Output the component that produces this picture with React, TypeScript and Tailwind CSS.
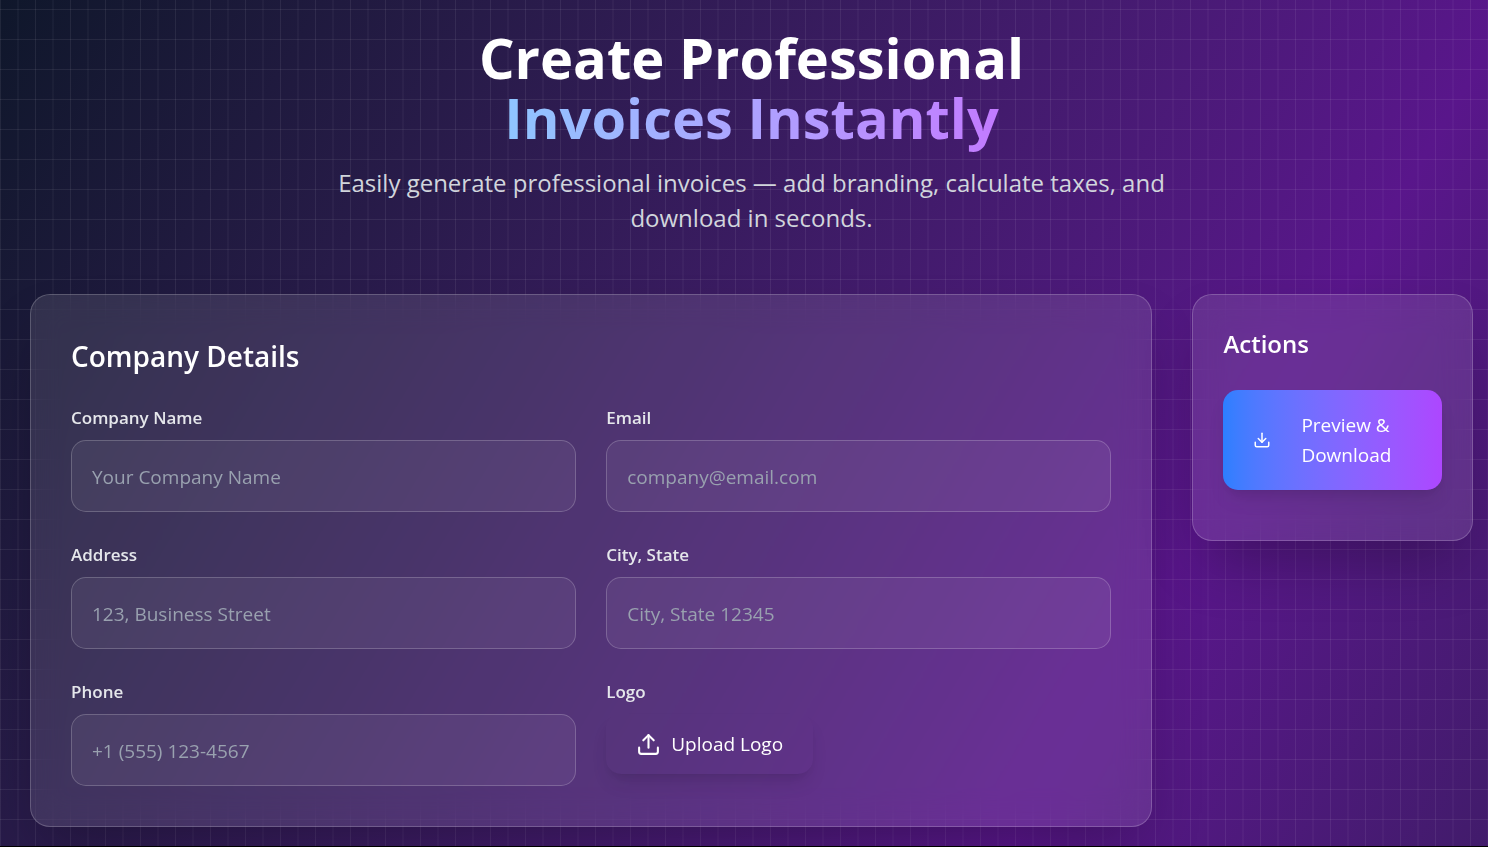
import React from "react";
import { Download, Upload } from "lucide-react";

type FieldProps = {
  id: string;
  label: string;
  placeholder: string;
  type?: string;
};

const labelClass =
  "mb-2 block text-[17px] leading-7 font-semibold text-gray-200";

const cardClass =
  "rounded-[20px] border border-white/20 bg-white/10 shadow-[0_31px_62px_-15px_rgba(0,0,0,0.28)] backdrop-blur-lg";

const buttonClass =
  "flex items-center rounded-[15px] px-[30px] text-[19px] leading-[30px] font-medium text-white shadow-[0_12px_19px_-4px_rgba(0,0,0,0.1),0_5px_8px_-5px_rgba(0,0,0,0.1)]";

function Field({ id, label, placeholder, type = "text" }: FieldProps) {
  return (
    <div>
      <label htmlFor={id} className={labelClass}>
        {label}
      </label>
      <input
        id={id}
        type={type}
        placeholder={placeholder}
        className="h-[72px] w-full rounded-[15px] border border-white/20 bg-white/[0.06] px-5 pt-0.5 text-[19px] text-white placeholder:text-[#99a1af] focus:outline-none focus:ring-2 focus:ring-blue-400"
      />
    </div>
  );
}

function CompanyDetails() {
  return (
    <section className={`${cardClass} p-10`}>
      <h2 className="mb-[27px] text-[28px] leading-[42px] font-semibold text-white">Company Details</h2>
      <div className="grid grid-cols-2 gap-x-[30px] gap-y-[29px]">
        <Field id="company-name" label="Company Name" placeholder="Your Company Name" />
        <Field id="email" label="Email" placeholder="company@email.com" type="email" />
        <Field id="address" label="Address" placeholder="123, Business Street" />
        <Field id="city" label="City, State" placeholder="City, State 12345" />
        <Field id="phone" label="Phone" placeholder="+1 (555) 123-4567" type="tel" />
        <div>
          <span id="logo-label" className={labelClass}>
            Logo
          </span>
          <button
            type="button"
            aria-describedby="logo-label"
            className={`${buttonClass} gap-[10px] py-[15px]`}
          >
            <Upload size={25} />
            Upload Logo
          </button>
        </div>
      </div>
    </section>
  );
}

function Actions() {
  return (
    <aside className={`${cardClass} px-[30px] pt-[30px] pb-[50px]`}>
      <h3 className="mb-7 text-2xl leading-[37px] font-semibold text-white">Actions</h3>
      <button
        type="button"
        className={`${buttonClass} w-full gap-[30px] bg-linear-to-r from-blue-500 to-purple-500 py-5 text-left`}
      >
        <Download size={18} className="shrink-0" />
        <span>Preview &amp; Download</span>
      </button>
    </aside>
  );
}

export default function App() {
  return (
    <main className="min-h-screen border-b border-black bg-[linear-gradient(to_right,rgba(255,255,255,0.07)_1px,transparent_1px,transparent_17px,rgba(255,255,255,0.03)_17px,rgba(255,255,255,0.03)_19px,transparent_19px),linear-gradient(to_bottom,transparent_9px,rgba(255,255,255,0.07)_9px,rgba(255,255,255,0.07)_10px,transparent_10px),linear-gradient(121deg_in_oklab,#0f172b_0px,#59168b_1301px,#0f172b_2602px)] bg-[length:35px_30px,35px_30px,auto] pt-[27px] pr-[15px] pb-[19px] pl-[30px] font-['Open_Sans','Noto_Sans',sans-serif]">
      <header className="mb-[59px] text-center">
        <h1 className="text-[56px] leading-[60px] font-bold text-white">
          <span className="block">Create Professional</span>
          <span className="mx-auto -mb-4 block w-fit bg-linear-to-r from-blue-300 to-purple-400 bg-clip-text pb-4 text-transparent">
            Invoices Instantly
          </span>
        </h1>
        <p className="mx-auto mt-[18px] max-w-4xl text-2xl leading-[35px] text-gray-300">
          Easily generate professional invoices — add branding, calculate taxes, and download in seconds.
        </p>
      </header>
      <div className="grid grid-cols-[4fr_1fr] items-start gap-10">
        <CompanyDetails />
        <Actions />
      </div>
    </main>
  );
}
